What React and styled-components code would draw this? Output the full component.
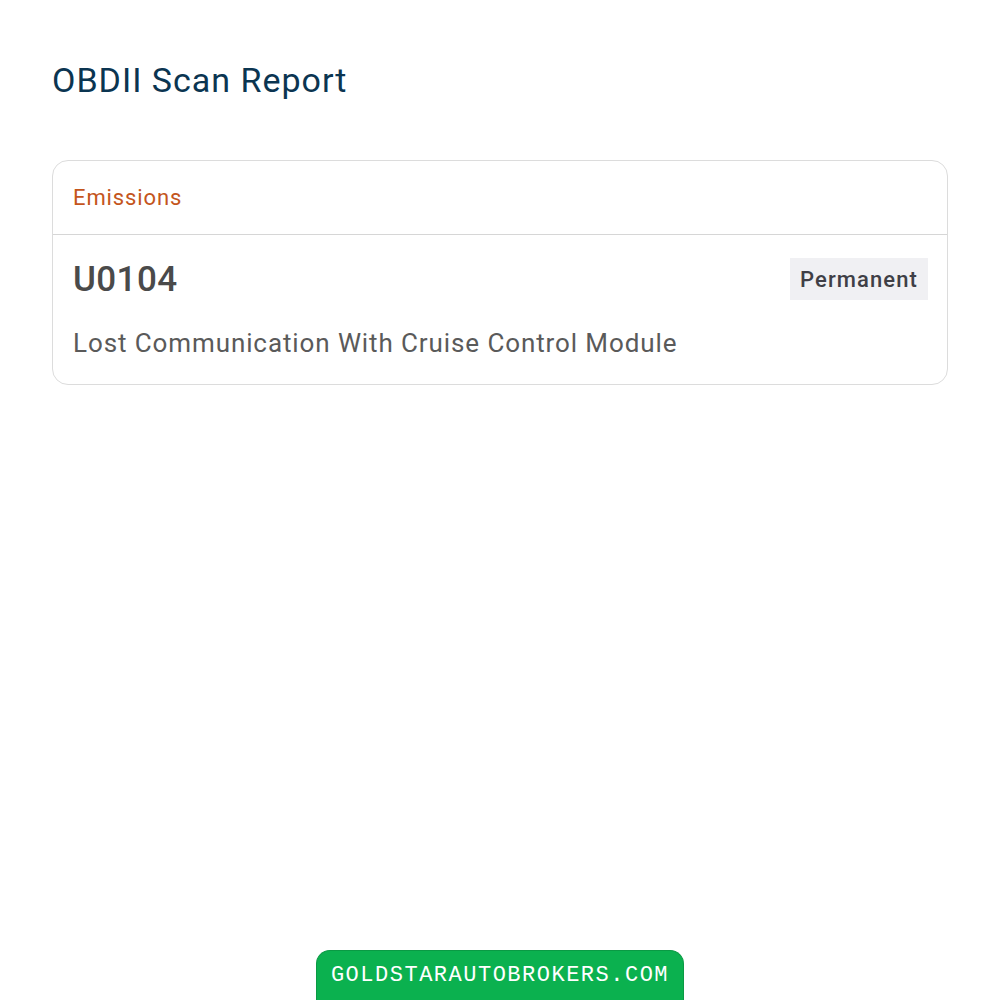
import styled, { createGlobalStyle } from "styled-components";

const GlobalStyle = createGlobalStyle`
  html, body {
    margin: 0;
    padding: 0;
    background: #ffffff;
    font-family: Roboto, "Liberation Sans", sans-serif;
  }
`;

const Page = styled.div`
  min-height: 100vh;
  display: flex;
  flex-direction: column;
  box-sizing: border-box;
  padding: 0 52px;
`;

const Title = styled.h1`
  margin: 56px 0 0;
  font-size: 34px;
  font-weight: 400;
  letter-spacing: 1px;
  line-height: 48px;
  color: #0b3551;
`;

const Card = styled.section`
  margin-top: 56px;
  border: 1px solid #dcdcdc;
  border-radius: 16px;
  overflow: hidden;
`;

const CardHeader = styled.div`
  height: 73px;
  display: flex;
  align-items: center;
  padding: 0 20px;
  border-bottom: 1px solid #d6d6d6;
  font-size: 22px;
  letter-spacing: 0.9px;
  color: #c4551c;
`;

const CardBody = styled.div`
  padding: 23px 19px 24px 20px;
`;

const CodeRow = styled.div`
  display: flex;
  align-items: center;
  justify-content: space-between;
`;

const Code = styled.span`
  font-size: 35px;
  font-weight: 500;
  letter-spacing: 0.4px;
  color: #4a4a4a;
`;

const Badge = styled.span`
  display: inline-flex;
  align-items: center;
  height: 42px;
  padding: 0 10px;
  background: #f0f0f3;
  font-size: 22px;
  font-weight: 500;
  letter-spacing: 1.1px;
  color: #3f3f46;
`;

const Description = styled.p`
  margin: 26px 0 0;
  font-size: 26px;
  letter-spacing: 0.9px;
  line-height: 34px;
  color: #5a5a5a;
`;

const Footer = styled.footer`
  margin-top: auto;
  align-self: center;
  width: 368px;
  height: 50px;
  box-sizing: border-box;
  display: flex;
  align-items: center;
  justify-content: center;
  background: #0bb14f;
  border: 1px solid #0a9a44;
  border-bottom: none;
  border-radius: 14px 14px 0 0;
  font-family: "Liberation Mono", "Courier New", monospace;
  font-size: 22px;
  letter-spacing: 1.5px;
  color: #ffffff;
`;

export default function App() {
  return (
    <>
      <GlobalStyle />
      <Page>
        <Title>OBDII Scan Report</Title>
        <Card>
          <CardHeader>Emissions</CardHeader>
          <CardBody>
            <CodeRow>
              <Code>U0104</Code>
              <Badge>Permanent</Badge>
            </CodeRow>
            <Description>Lost Communication With Cruise Control Module</Description>
          </CardBody>
        </Card>
        <Footer>GOLDSTARAUTOBROKERS.COM</Footer>
      </Page>
    </>
  );
}
